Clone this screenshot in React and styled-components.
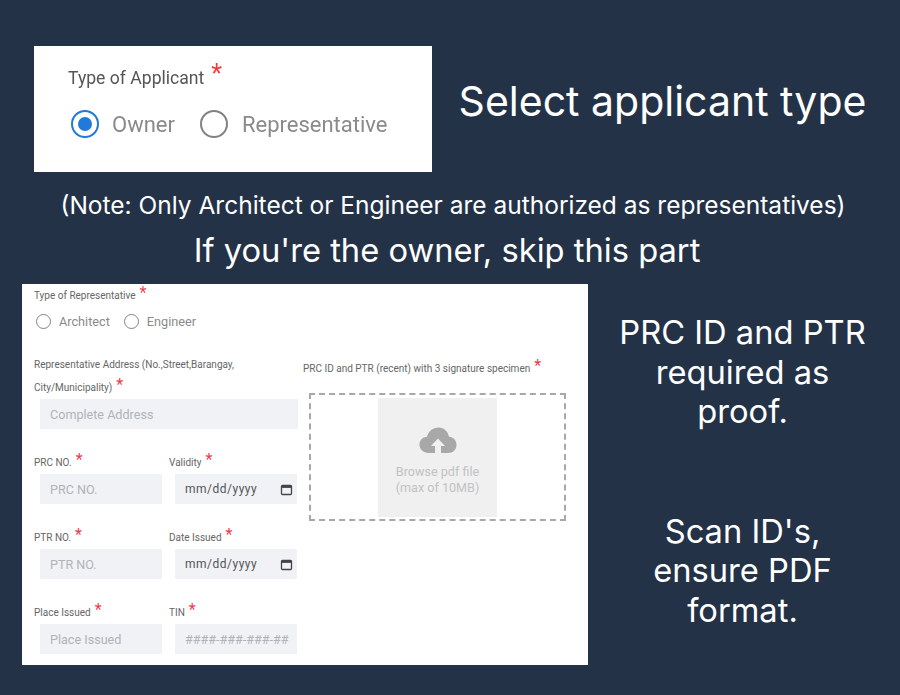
import React from 'react';
import styled, { createGlobalStyle } from 'styled-components';

const GlobalStyle = createGlobalStyle`
  html, body {
    margin: 0;
    padding: 0;
    background: #233247;
  }
  * { box-sizing: border-box; }
`;

const Page = styled.div`
  width: 900px;
  height: 695px;
  overflow: hidden;
  background: #233247;
  padding-top: 46px;
  font-family: Inter, "Liberation Sans", sans-serif;
  color: #fff;
`;

const TopRow = styled.div`
  display: flex;
  padding-left: 34px;
  height: 126px;
`;

const ApplicantCard = styled.div`
  width: 398px;
  height: 126px;
  background: #fff;
  padding: 17px 0 0 34px;
  font-family: Roboto, "Liberation Sans", sans-serif;
  filter: blur(0.6px);
`;

const BigLabel = styled.div`
  font-size: 17.6px;
  line-height: 30px;
  color: #555;
`;

const BigStar = styled.span`
  color: #f23b3b;
  font-size: 25px;
  line-height: 0;
  margin-left: 7px;
  position: relative;
  top: -2px;
`;

const RadioRow = styled.div`
  display: flex;
  align-items: center;
  gap: ${p => p.$gap}px;
  margin-top: ${p => p.$top}px;
  margin-left: ${p => p.$left}px;
`;

const RadioItem = styled.div`
  display: flex;
  align-items: center;
  gap: ${p => p.$gap}px;
  font-size: ${p => p.$size}px;
  color: #8a8a8a;
`;

const Radio = styled.span`
  display: flex;
  align-items: center;
  justify-content: center;
  width: ${p => p.$size}px;
  height: ${p => p.$size}px;
  border-radius: 50%;
  border: ${p => (p.$size > 20 ? 2.5 : 1.5)}px solid ${p => (p.$checked ? '#1f7ad8' : '#828282')};
  &::after {
    content: '';
    display: ${p => (p.$checked ? 'block' : 'none')};
    width: 14px;
    height: 14px;
    border-radius: 50%;
    background: #1f7ad8;
  }
`;

const Heading = styled.div`
  flex: 1;
  display: flex;
  align-items: center;
  justify-content: center;
  font-size: 41px;
  padding-bottom: 16px;
  padding-right: 7px;
  white-space: nowrap;
`;

const Note = styled.div`
  margin-top: 18px;
  padding-left: 6px;
  text-align: center;
  font-size: 24.5px;
  line-height: 30px;
  white-space: nowrap;
`;

const Skip = styled.div`
  margin-top: 10px;
  margin-left: -6px;
  text-align: center;
  font-size: 32.7px;
  line-height: 40px;
  white-space: nowrap;
`;

const BottomRow = styled.div`
  display: flex;
  padding-left: 22px;
  margin-top: 14px;
`;

const FormCard = styled.div`
  width: 566px;
  height: 381px;
  background: #fff;
  display: flex;
  padding: 3px 0 0 12px;
  font-family: Roboto, "Liberation Sans", sans-serif;
  filter: blur(0.6px);
`;

const LeftCol = styled.div`
  width: 264px;
`;

const RightCol = styled.div`
  margin-left: 5px;
  padding-top: 73px;
`;

const Label = styled.div`
  font-size: 10px;
  line-height: ${p => p.$lh || 18}px;
  margin-bottom: ${p => p.$mb || 0}px;
  color: #666;
  white-space: nowrap;
`;

const Star = styled.span`
  color: #f0394a;
  font-size: 16px;
  line-height: 0;
  margin-left: 4px;
  position: relative;
  top: -1px;
`;

const AddressBlock = styled.div`
  margin-top: 24px;
`;

const Grid = styled.div`
  display: grid;
  grid-template-columns: 135px 129px;
  row-gap: 25px;
  margin-top: 25px;
`;

const Field = styled.div``;

const Input = styled.div`
  display: flex;
  align-items: center;
  justify-content: space-between;
  height: 30px;
  width: ${p => (p.$wide ? 258 : 122)}px;
  margin-left: 6px;
  padding: 0 ${p => (p.$date ? 4 : 10)}px 0 10px;
  background: #f0f2f5;
  font-size: ${p => (p.$date ? 12 : 12.6)}px;
  letter-spacing: ${p => (p.$date ? 0.5 : 0)}px;
  color: ${p => (p.$date ? '#555' : '#b0b3b8')};
  white-space: nowrap;
`;

const CalendarIcon = () => (
  <svg width="13" height="13" viewBox="0 0 13 13" fill="none">
    <rect x="1.5" y="2.5" width="10" height="9" rx="1" stroke="#444" strokeWidth="1.3" />
    <rect x="1.5" y="2.5" width="10" height="2.4" fill="#444" />
  </svg>
);

const DropZone = styled.div`
  width: 257px;
  height: 128px;
  margin: 15px 0 0 6px;
  border: 2px dashed #a8a8a8;
  display: flex;
  justify-content: center;
  padding: 3px 0 2px;
`;

const Browse = styled.div`
  width: 119px;
  background: #f0f0f0;
  display: flex;
  flex-direction: column;
  align-items: center;
  padding-top: 28px;
  font-size: 12.6px;
  line-height: 16px;
  color: #c2c2c2;
  text-align: center;
`;

const CloudSvg = styled.svg`
  margin-bottom: 8px;
`;

const CloudIcon = () => (
  <CloudSvg width="40" height="30" viewBox="0 0 40 30">
    <path
      d="M11 27 C5 27 1.5 23 1.5 18.5 C1.5 14 5 11 9 10.8 C10.5 5 15 1.5 20.5 1.5 C26 1.5 30 5.5 31 10.8 C35.5 11 38.5 14.5 38.5 19 C38.5 23.5 35 27 30 27 Z"
      fill="#a8a8a8"
    />
    <path d="M20 12.5 L27 20 H23 V27 H17 V20 H13 Z" fill="#f0f0f0" />
  </CloudSvg>
);

const SideCol = styled.div`
  width: 309px;
  padding-top: 29px;
  text-align: center;
  font-size: 32.7px;
  line-height: 39.5px;
`;

const SideBlock = styled.div`
  margin-bottom: ${p => p.$gap || 0}px;
  white-space: nowrap;
`;

const Req = () => <Star>*</Star>;

const App = () => (
  <>
    <GlobalStyle />
    <Page>
      <TopRow>
        <ApplicantCard>
          <BigLabel>Type of Applicant<BigStar>*</BigStar></BigLabel>
          <RadioRow $gap={25} $top={17} $left={3}>
            <RadioItem $gap={13} $size={22}><Radio $size={28} $checked />Owner</RadioItem>
            <RadioItem $gap={14} $size={22}><Radio $size={28} />Representative</RadioItem>
          </RadioRow>
        </ApplicantCard>
        <Heading>Select applicant type</Heading>
      </TopRow>
      <Note>(Note: Only Architect or Engineer are authorized as representatives)</Note>
      <Skip>If you're the owner, skip this part</Skip>
      <BottomRow>
        <FormCard>
          <LeftCol>
            <Label>Type of Representative<Req /></Label>
            <RadioRow $gap={14} $top={9} $left={2}>
              <RadioItem $gap={8} $size={12.7}><Radio $size={15} />Architect</RadioItem>
              <RadioItem $gap={8} $size={12.7}><Radio $size={15} />Engineer</RadioItem>
            </RadioRow>
            <AddressBlock>
              <Label $lh={23}>Representative Address (No.,Street,Barangay,</Label>
              <Label $lh={23}>City/Municipality)<Req /></Label>
              <Input $wide>Complete Address</Input>
            </AddressBlock>
            <Grid>
              <Field>
                <Label $mb={2}>PRC NO.<Req /></Label>
                <Input>PRC NO.</Input>
              </Field>
              <Field>
                <Label $mb={2}>Validity<Req /></Label>
                <Input $date>mm/dd/yyyy<CalendarIcon /></Input>
              </Field>
              <Field>
                <Label $mb={2}>PTR NO.<Req /></Label>
                <Input>PTR NO.</Input>
              </Field>
              <Field>
                <Label $mb={2}>Date Issued<Req /></Label>
                <Input $date>mm/dd/yyyy<CalendarIcon /></Input>
              </Field>
              <Field>
                <Label $mb={2}>Place Issued<Req /></Label>
                <Input>Place Issued</Input>
              </Field>
              <Field>
                <Label $mb={2}>TIN<Req /></Label>
                <Input>####-###-###-##</Input>
              </Field>
            </Grid>
          </LeftCol>
          <RightCol>
            <Label>PRC ID and PTR (recent) with 3 signature specimen<Req /></Label>
            <DropZone>
              <Browse>
                <CloudIcon />
                <span>Browse pdf file</span>
                <span>(max of 10MB)</span>
              </Browse>
            </DropZone>
          </RightCol>
        </FormCard>
        <SideCol>
          <SideBlock $gap={80}>PRC ID and PTR<br />required as<br />proof.</SideBlock>
          <SideBlock>Scan ID's,<br />ensure PDF<br />format.</SideBlock>
        </SideCol>
      </BottomRow>
    </Page>
  </>
);

export default App;
